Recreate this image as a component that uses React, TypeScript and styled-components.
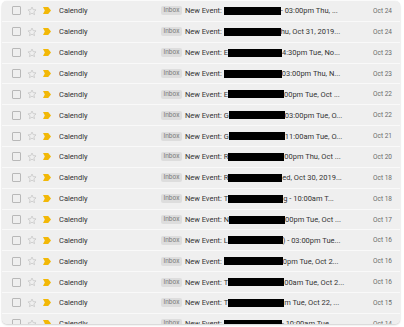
import React from 'react';
import styled, { createGlobalStyle } from 'styled-components';

const GlobalStyle = createGlobalStyle`
  html, body {
    margin: 0;
    padding: 0;
    background: #ffffff;
  }
  body {
    font-family: Roboto, "Liberation Sans", Arial, sans-serif;
  }
`;

const Page = styled.div`
  width: 404px;
  height: 327px;
  box-sizing: border-box;
  padding: 1px 4px 0 2px;
  overflow: hidden;
`;

const Card = styled.div`
  height: 323px;
  border-radius: 5px;
  overflow: hidden;
  background: #f5f5f5;
  box-shadow: 0 1px 2px rgba(0, 0, 0, 0.18), 0 0 1px rgba(0, 0, 0, 0.12);
`;

const Row = styled.div`
  height: 20.86px;
  box-sizing: border-box;
  display: flex;
  align-items: center;
  padding: 0 8px 0 10px;
  background: #efefef;
  border-bottom: 1px solid #f9f9f9;
  font-size: 7.5px;
  color: #333333;
  white-space: nowrap;
`;

const Checkbox = styled.span`
  width: 7px;
  height: 7px;
  border: 1px solid #b8b8b8;
  border-radius: 1px;
  flex: none;
`;

const StarIcon = styled.svg`
  margin-left: 6px;
  flex: none;
`;

const Marker = styled.svg`
  margin-left: 6px;
  flex: none;
`;

const Sender = styled.span`
  margin-left: 8px;
  width: 102px;
  flex: none;
  overflow: hidden;
`;

const Subject = styled.span`
  flex: 1;
  display: flex;
  align-items: center;
  overflow: hidden;
`;

const InboxChip = styled.span`
  flex: none;
  background: #dddddd;
  color: #7a7a7a;
  font-size: 6.5px;
  line-height: 9px;
  padding: 0 2.5px;
  border-radius: 2px;
  margin-right: 3px;
`;

const Redacted = styled.span<{ $w: number }>`
  display: inline-block;
  width: ${(p) => p.$w}px;
  height: 8px;
  background: #000000;
  flex: none;
`;

const DateText = styled.span`
  flex: none;
  font-size: 6.5px;
  color: #6a6a6a;
  margin-left: 8px;
`;

const Star = () => (
  <StarIcon width="10" height="10" viewBox="0 0 24 24">
    <path
      d="M12 2.5l2.9 6.2 6.8.7-5.1 4.6 1.5 6.7L12 17.3l-6.1 3.4 1.5-6.7-5.1-4.6 6.8-.7z"
      fill="none"
      stroke="#c4c4c4"
      strokeWidth="1.7"
      strokeLinejoin="round"
    />
  </StarIcon>
);

const Important = () => (
  <Marker width="8" height="7" viewBox="0 0 8 7">
    <path d="M0 0H5.2L8 3.5 5.2 7H0L1.8 3.5Z" fill="#f2b807" />
  </Marker>
);

type Mail = { lead: string; box: number; tail: string; date: string };

const mails: Mail[] = [
  { lead: '', box: 57, tail: ' - 03:00pm Thu, ...', date: 'Oct 24' },
  { lead: '', box: 57, tail: 'hu, Oct 31, 2019...', date: 'Oct 24' },
  { lead: 'E', box: 54, tail: '4:30pm Tue, No...', date: 'Oct 23' },
  { lead: '', box: 58, tail: ' 03:00pm Thu, N...', date: 'Oct 23' },
  { lead: 'E', box: 56, tail: '00pm Tue, Oct ...', date: 'Oct 22' },
  { lead: 'G', box: 56, tail: '03:00pm Tue, O...', date: 'Oct 22' },
  { lead: 'G', box: 56, tail: '11:00am Tue, O...', date: 'Oct 21' },
  { lead: 'R', box: 56, tail: '00pm Thu, Oct ...', date: 'Oct 20' },
  { lead: 'R', box: 54, tail: 'ed, Oct 30, 2019...', date: 'Oct 18' },
  { lead: 'T', box: 55, tail: 'g - 10:00am T...', date: 'Oct 18' },
  { lead: 'N', box: 56, tail: '00pm Tue, Oct ...', date: 'Oct 17' },
  { lead: 'L', box: 55, tail: ') - 03:00pm Tue...', date: 'Oct 16' },
  { lead: '', box: 59, tail: '0pm Tue, Oct 2...', date: 'Oct 16' },
  { lead: 'T', box: 56, tail: '00am Tue, Oct 2...', date: 'Oct 16' },
  { lead: 'T', box: 56, tail: 'm Tue, Oct 22, ...', date: 'Oct 15' },
  { lead: '', box: 58, tail: ' - 10:00am Tue...', date: 'Oct 14' },
];

export default function App() {
  return (
    <>
      <GlobalStyle />
      <Page>
        <Card>
          {mails.map((m, i) => (
            <Row key={i}>
              <Checkbox />
              <Star />
              <Important />
              <Sender>Calendly</Sender>
              <Subject>
                <InboxChip>Inbox</InboxChip>
                <span>New Event:&nbsp;{m.lead}</span>
                <Redacted $w={m.box} />
                <span>{m.tail}</span>
              </Subject>
              <DateText>{m.date}</DateText>
            </Row>
          ))}
        </Card>
      </Page>
    </>
  );
}
